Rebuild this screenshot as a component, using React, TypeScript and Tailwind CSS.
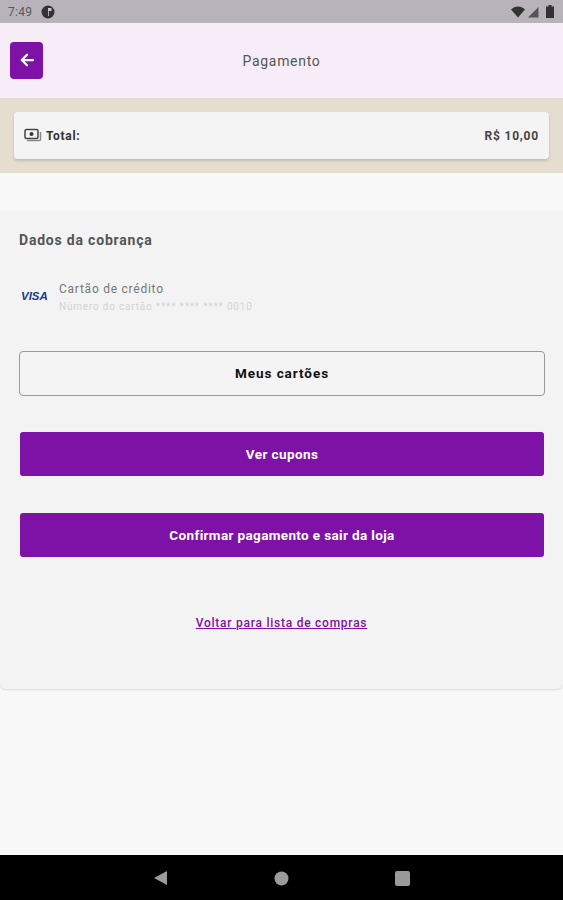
import React from "react";

export default function App() {
  return (
    <div className="w-[563px] h-[900px] flex flex-col bg-[#f8f8f8] overflow-hidden font-['Roboto',sans-serif]">
      <div className="h-[23px] bg-[#b8b3bb] flex items-center justify-between pl-2 pr-[8px]">
        <div className="flex items-center gap-[10px]">
          <span className="text-[12px] text-[#5a575c] tracking-[0.3px]">7:49</span>
          <svg width="14" height="14" viewBox="0 0 14 14" className="ml-[-1px]">
            <circle cx="7" cy="7" r="6.5" fill="#333" />
            <path d="M7 3h3.5v3H7.8v5H7z" fill="#c8c4cb" />
          </svg>
        </div>
        <div className="flex items-center gap-[3px]">
          <svg width="14" height="12" viewBox="0 0 14 12"><path d="M0 3.5C4-.6 10-.6 14 3.5L7 11.5z" fill="#333" /></svg>
          <svg width="11" height="12" viewBox="0 0 11 12"><path d="M0 11.5L10.5 1v10.5z" fill="#555" /></svg>
          <svg width="10" height="13" viewBox="0 0 10 13" className="ml-[3px]"><path d="M3.5 0h3v1.5H9V13H1V1.5h2.5z" fill="#333" /></svg>
        </div>
      </div>
      <div className="h-[75px] bg-[#f7edf9] flex items-center relative pl-[10px]">
        <div className="w-[33px] h-[37px] rounded-[4px] bg-[#7f12a6] flex items-center justify-center mt-[-1px]">
          <svg width="18" height="18" viewBox="0 0 24 24" fill="none" stroke="#fff" strokeWidth="3" strokeLinecap="round" strokeLinejoin="round"><path d="M20 12H5M12 5l-7 7 7 7" /></svg>
        </div>
        <span className="flex-1 text-center text-[14px] text-[#555] tracking-[0.7px] pr-[43px] mt-[1px]">Pagamento</span>
      </div>
      <div className="h-[75px] bg-[#e4ddd0] px-[14px] pt-[14px]">
        <div className="h-[47px] bg-[#f4f4f4] rounded-[4px] shadow-[0_2px_3px_rgba(0,0,0,0.15)] flex items-center justify-between pl-[10px] pr-[10px]">
          <div className="flex items-center gap-[4px]">
            <svg width="18" height="15" viewBox="0 0 18 15" fill="none">
              <rect x="1" y="1.5" width="13" height="9" rx="1.5" stroke="#444" strokeWidth="1.5" />
              <circle cx="7.5" cy="6" r="2" fill="#333" />
              <path d="M16.5 4v7.5a1 1 0 0 1-1 1H3" stroke="#888" strokeWidth="1.5" />
            </svg>
            <span className="text-[12px] font-bold text-[#333] tracking-[0.7px]">Total:</span>
          </div>
          <span className="text-[12px] font-bold text-[#444] tracking-[0.8px]">R$ 10,00</span>
        </div>
      </div>
      <div className="h-[38px]" />
      <div className="h-[478px] bg-[#f3f3f3] rounded-b-[6px] shadow-[0_1px_2px_rgba(0,0,0,0.12)] px-[19px] pt-[20px] flex flex-col">
        <h2 className="text-[14px] leading-[18px] font-bold text-[#555] tracking-[0.8px]">Dados da cobrança</h2>
        <div className="flex items-center mt-[30px] h-[37px]">
          <svg width="28" height="12" viewBox="0 0 28 12" className="ml-[1px] mt-[-5px]">
            <path d="M1.5 2.5l2.5 1 .5 2-2-2.5z" fill="#e8a020" />
            <text x="1" y="10.5" fontFamily="Liberation Sans" fontStyle="italic" fontWeight="700" fontSize="11.5" fill="#1a3a8f">VISA</text>
          </svg>
          <div className="ml-[11px] flex flex-col">
            <span className="text-[12px] leading-[18px] text-[#777] tracking-[0.75px]">Cartão de crédito</span>
            <span className="text-[10px] leading-[18px] text-[#d4d4d4] tracking-[0.8px]">Número do cartão **** **** **** 0010</span>
          </div>
        </div>
        <button className="mt-[35px] mr-[-1px] h-[45px] rounded-[4px] border border-[#9a9a9a] bg-[#f4f4f4] text-[13.5px] font-bold text-[#111] tracking-[0.95px]">Meus cartões</button>
        <button className="mt-[36px] ml-[1px] h-[44px] rounded-[3px] bg-[#7f12a6] text-[13.5px] font-bold text-white tracking-[0.4px]">Ver cupons</button>
        <button className="mt-[37px] ml-[1px] h-[44px] rounded-[3px] bg-[#7f12a6] text-[13.5px] font-bold text-white tracking-[0.36px]">Confirmar pagamento e sair da loja</button>
        <a className="mt-[57px] self-center text-[12px] font-medium text-[#7f12a6] underline tracking-[0.75px]">Voltar para lista de compras</a>
      </div>
      <div className="flex-1" />
      <div className="h-[45px] bg-black flex items-center justify-center relative">
        <div className="flex items-center gap-[106px] mt-[1px]">
          <svg width="15" height="16" viewBox="0 0 15 16"><path d="M14 1v14L1 8z" fill="#9a9a9a" /></svg>
          <svg width="15" height="15" viewBox="0 0 15 15"><circle cx="7.5" cy="7.5" r="7" fill="#9a9a9a" /></svg>
          <svg width="15" height="15" viewBox="0 0 15 15"><rect x="0" y="0" width="15" height="15" rx="2" fill="#9a9a9a" /></svg>
        </div>
      </div>
    </div>
  );
}
